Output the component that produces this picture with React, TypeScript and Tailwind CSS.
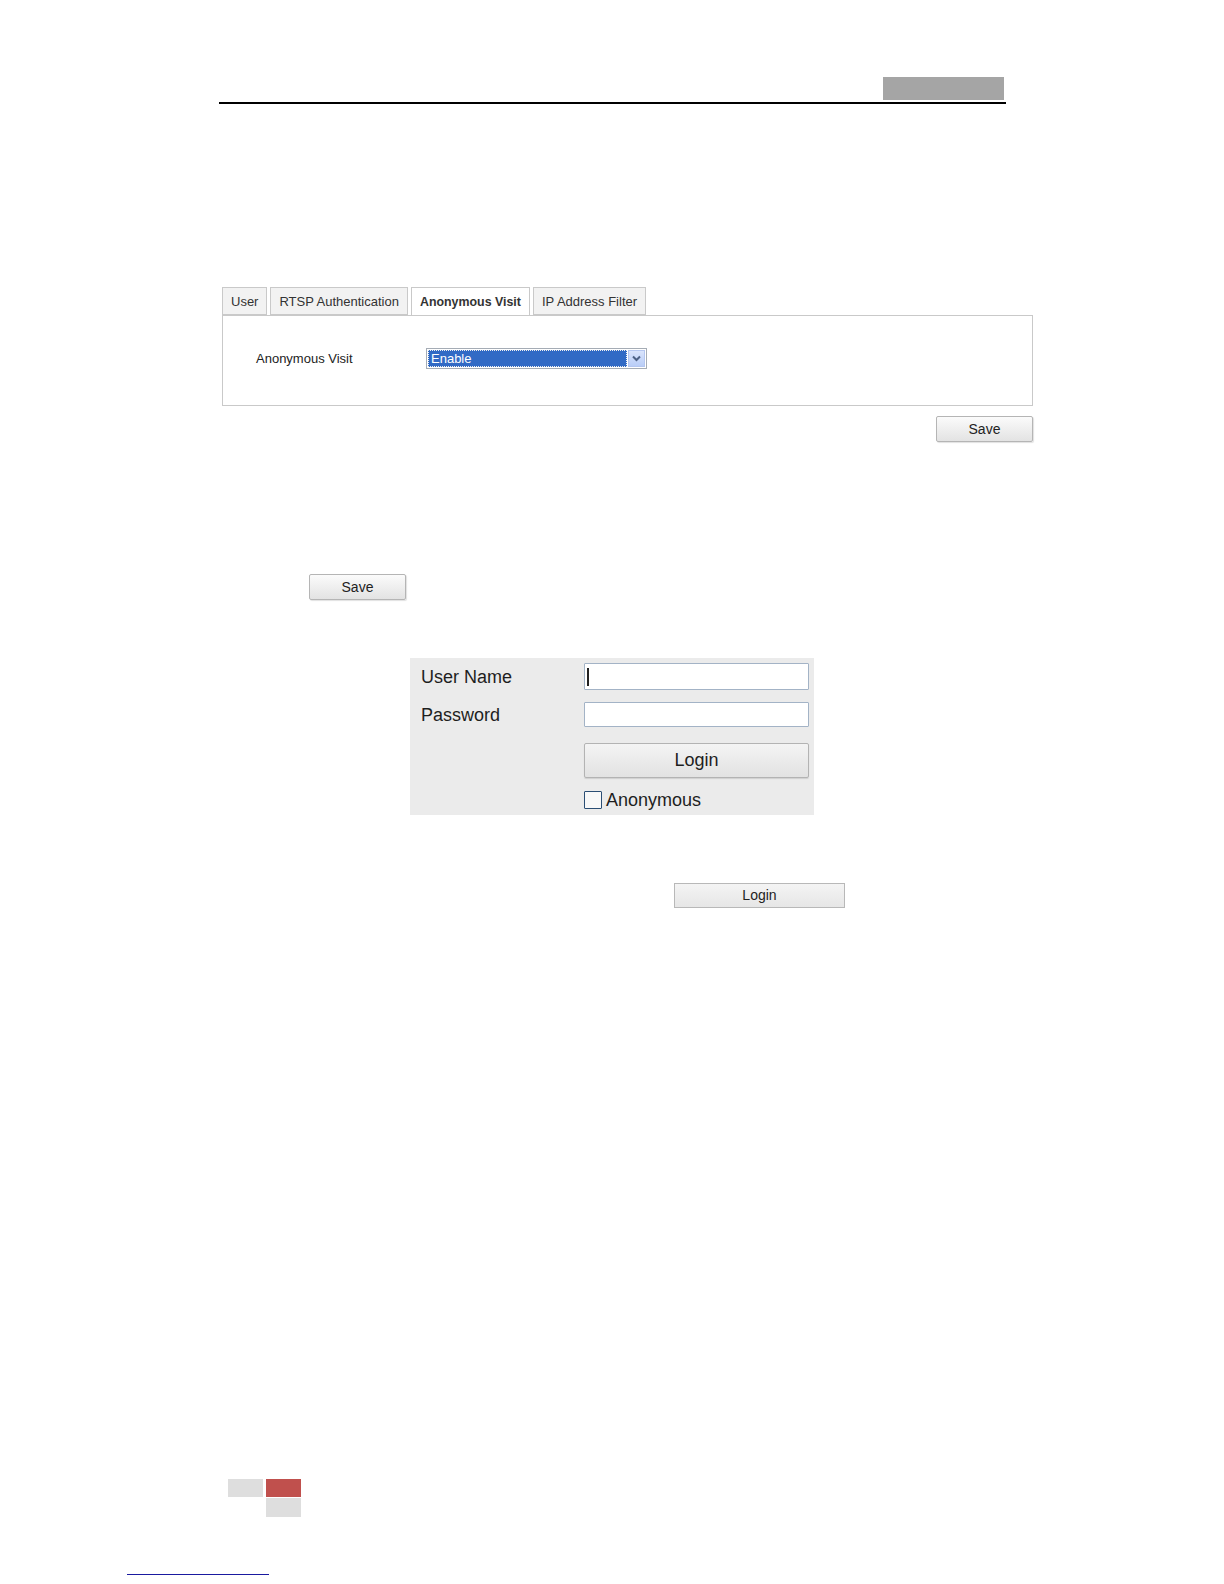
import React from "react";

const font = { fontFamily: '"Liberation Sans", Arial, sans-serif' };

function Tab({ label, active }: { label: string; active?: boolean }) {
  return (
    <div
      className={
        "h-[28px] px-[8px] flex items-center border border-[#c9c9c9] text-[#333] pt-[2px] " +
        (active ? "bg-white border-b-white font-bold -mb-px h-[29px] text-[12.4px]" : "bg-[#f2f2f2] text-[13px]")
      }
    >
      {label}
    </div>
  );
}

function GrayButton({ label, className }: { label: string; className: string }) {
  return (
    <div
      className={
        "flex items-center justify-center border border-[#b5b5b5] rounded-[2px] bg-gradient-to-b from-[#fbfbfb] to-[#e3e3e3] text-[#222] shadow-[1px_1px_1px_rgba(0,0,0,0.12)] " +
        className
      }
    >
      {label}
    </div>
  );
}

export default function App() {
  return (
    <div className="w-[1224px] min-h-[1584px] bg-white flex flex-col" style={font}>
      {/* header */}
      <div className="pt-[77px] pl-[219px]">
        <div className="w-[787px] border-b-[2px] border-black flex justify-end pb-[2px] pr-[2px]">
          <div className="w-[121px] h-[23px] bg-[#a5a5a5]" />
        </div>
      </div>

      {/* tabs section */}
      <div className="mt-[183px] ml-[222px] w-[811px] flex flex-col">
        <div className="flex items-end gap-[3px]">
          <Tab label="User" />
          <Tab label="RTSP Authentication" />
          <Tab label="Anonymous Visit" active />
          <Tab label="IP Address Filter" />
        </div>
        <div className="h-[91px] border border-[#c9c9c9] flex items-center pl-[33px] pb-[4px]">
          <div className="w-[170px] text-[13px] text-[#222]">Anonymous Visit</div>
          <div className="w-[221px] h-[21px] border border-[#a5acb5] flex items-stretch bg-white p-[1px]">
            <div className="flex-1 bg-[#316ac5] border border-dotted border-[#f0f0f0] text-white text-[13px] leading-[15px] pl-[2px]">
              Enable
            </div>
            <div className="w-[17px] ml-[1px] bg-gradient-to-b from-[#d9e4fc] to-[#b9cdf7] border border-[#b4c6f0] flex items-center justify-center">
              <svg width="9" height="7" viewBox="0 0 9 7">
                <path d="M1 1.5 L4.5 5 L8 1.5" stroke="#4d6185" strokeWidth="2" fill="none" />
              </svg>
            </div>
          </div>
        </div>
        <div className="flex justify-end mt-[10px]">
          <GrayButton label="Save" className="w-[97px] h-[26px] text-[14px]" />
        </div>
      </div>

      {/* second save */}
      <div className="mt-[132px] ml-[309px]">
        <GrayButton label="Save" className="w-[97px] h-[26px] text-[14px]" />
      </div>

      {/* login panel */}
      <div className="mt-[58px] ml-[410px] w-[404px] h-[157px] bg-[#ebebeb] flex flex-col pt-[5px] pl-[11px] pr-[5px] text-[18px] text-[#1e1e1e]">
        <div className="flex items-center h-[27px]">
          <div className="w-[163px] pt-[2px]">User Name</div>
          <div className="flex-1 h-[27px] border border-[#a3b3c6] bg-white rounded-[1px] flex items-center pl-[2px]">
            <div className="w-[2px] h-[18px] bg-[#222]" />
          </div>
        </div>
        <div className="flex items-center h-[25px] mt-[12px]">
          <div className="w-[163px] pt-[2px]">Password</div>
          <div className="flex-1 h-[25px] border border-[#a3b3c6] bg-white rounded-[1px]" />
        </div>
        <div className="flex mt-[16px]">
          <div className="w-[163px]" />
          <div className="flex-1 h-[35px] flex items-center justify-center border border-[#b3b3b3] rounded-[2px] bg-gradient-to-b from-[#f4f4f4] to-[#e2e2e2] shadow-[0_1px_1px_rgba(0,0,0,0.12)]">
            Login
          </div>
        </div>
        <div className="flex items-center mt-[13px]">
          <div className="w-[163px]" />
          <div className="w-[18px] h-[18px] border border-[#2b4e74] bg-[#f8f8f8] rounded-[1px]" />
          <div className="ml-[4px] leading-[18px]">Anonymous</div>
        </div>
      </div>

      {/* small login */}
      <div className="mt-[68px] ml-[674px]">
        <div className="w-[171px] h-[25px] flex items-center justify-center border border-[#b8b8b8] bg-gradient-to-b from-[#f4f4f4] to-[#e6e6e6] text-[14px] text-[#222]">
          Login
        </div>
      </div>

      {/* footer */}
      <div className="mt-[571px] ml-[228px] grid grid-cols-[35px_35px] grid-rows-[18px_19px] gap-x-[3px] gap-y-[1px]">
        <div className="bg-[#dedede]" />
        <div className="bg-[#c0504d]" />
        <div />
        <div className="bg-[#dedede]" />
      </div>
      <div className="mt-[57px] ml-[127px] w-[142px] h-[1px] bg-[#1a1aa0]" />
    </div>
  );
}
